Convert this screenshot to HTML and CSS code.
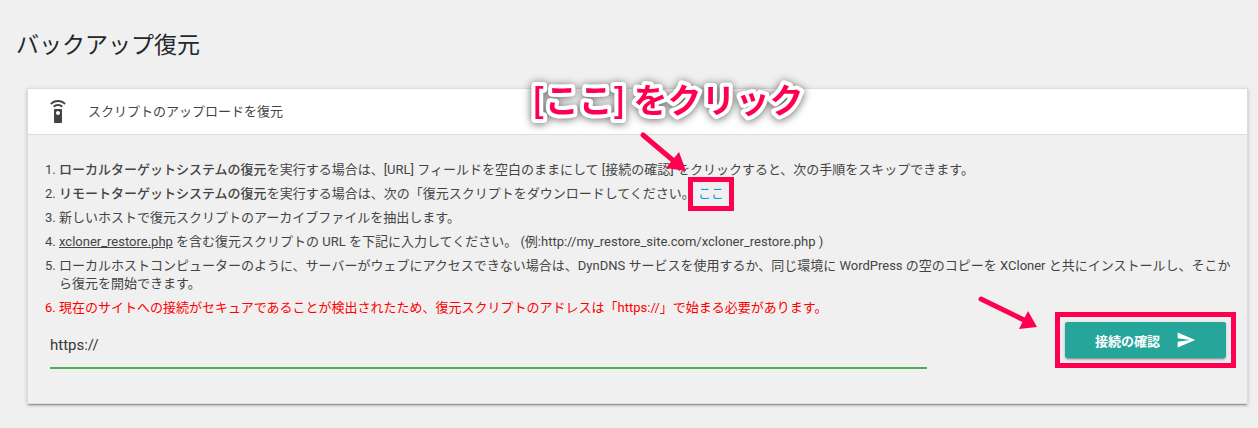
FILE: index.html
```html
<!DOCTYPE html>
<html lang="ja">

<head>
    <meta charset="UTF-8">
    <meta name="viewport" content="width=device-width, initial-scale=1.0">
    <title>バックアップ復元</title>
    <link rel="stylesheet" href="styles.css">
</head>

<body>
    <h1>バックアップ復元</h1>
    <section class="card">
        <header class="card-header">
            <svg class="remote-icon" viewBox="0 0 24 24" aria-hidden="true">
                <path d="M15 9H9c-.55 0-1 .45-1 1v12c0 .55.45 1 1 1h6c.55 0 1-.45 1-1V10c0-.55-.45-1-1-1zm-3 6c-1.100 0-2-.9-2-2s.9-2 2-2 2 .9 2 2-.9 2-2 2zM7.050 6.050l1.410 1.410C9.370 6.560 10.620 6 12 6s2.630.56 3.540 1.460l1.410-1.410C15.680 4.780 13.930 4 12 4s-3.680.78-4.950 2.050zM12 0C8.960 0 6.210 1.230 4.220 3.220l1.410 1.410C7.260 3.010 9.510 2 12 2s4.740 1.010 6.360 2.640l1.410-1.410C17.790 1.230 15.040 0 12 0z" />
            </svg>
            <h2>スクリプトのアップロードを復元</h2>
            <svg class="callout" viewBox="0 0 300 120">
                <text x="11" y="47">[ここ] をクリック</text>
                <path class="shaft" d="M122 69L154 96" />
                <path d="M165 105L158 86L145 102Z" />
            </svg>
        </header>
        <div class="card-body">
            <ol class="steps">
                <li><strong>ローカルターゲットシステムの復元</strong>を実行する場合は、[URL] フィールドを空白のままにして [接続の確認] をクリックすると、次の手順をスキップできます。</li>
                <li><strong>リモートターゲットシステムの復元</strong>を実行する場合は、次の「復元スクリプトをダウンロードしてください。 <a class="here" href="#">ここ</a></li>
                <li>新しいホストで復元スクリプトのアーカイブファイルを抽出します。</li>
                <li><u>xcloner_restore.php</u> を含む復元スクリプトの URL を下記に入力してください。 (例:http://my_restore_site.com/xcloner_restore.php )</li>
                <li>ローカルホストコンピューターのように、サーバーがウェブにアクセスできない場合は、DynDNS サービスを使用するか、同じ環境に WordPress の空のコピーを XCloner と共にインストールし、そこから復元を開始できます。</li>
                <li class="warning">現在のサイトへの接続がセキュアであることが検出されたため、復元スクリプトのアドレスは「https://」で始まる必要があります。</li>
            </ol>
            <form class="row">
                <input class="url" type="text" value="https://" aria-label="復元スクリプトの URL">
                <div class="action">
                    <button class="btn" type="button">接続の確認
                        <svg viewBox="0 0 24 24" aria-hidden="true">
                            <path d="M2 21L23 12 2 3v7l15 2-15 2z" />
                        </svg>
                    </button>
                    <svg class="btn-arrow" viewBox="0 0 60 34" aria-hidden="true">
                        <path class="shaft" d="M3 3L48 25" />
                        <path d="M59 31L50 15L41 33Z" />
                    </svg>
                </div>
            </form>
        </div>
    </section>
</body>

</html>
```

FILE: styles.css
```css
* {
    box-sizing: border-box;
}

body {
    margin: 0;
    padding: 30px 10px 24px 16px;
    background-color: #f0f0f0;
    color: #444;
    font-family: Roboto, "Noto Sans CJK JP", sans-serif;
    font-size: 13px;
    line-height: 18px;
}

h1 {
    margin: 0 0 26px;
    color: #23282d;
    font-size: 23px;
    font-weight: 400;
    line-height: 32px;
}

.card {
    margin-left: 11px;
    border: 1px solid #ddd;
    box-shadow: 0 2px 2px 0 rgba(0, 0, 0, 0.14), 0 1px 5px 0 rgba(0, 0, 0, 0.12), 0 3px 1px -2px rgba(0, 0, 0, 0.2);
}

.card-header {
    position: relative;
    display: flex;
    align-items: center;
    gap: 18px;
    height: 46px;
    padding: 0 18px;
    background-color: #fff;
    border-bottom: 1px solid #ddd;
}

.card-header h2 {
    margin: 0;
    font-size: 13px;
    font-weight: 400;
}

.remote-icon {
    width: 24px;
    height: 24px;
    fill: #444;
}

.card-body {
    padding: 26px 10px 34px 11px;
}

.steps {
    margin: 0;
    padding-left: 20px;
}

.steps li {
    margin-bottom: 6px;
}

.steps li:last-child {
    margin-bottom: 5px;
}

.steps strong {
    font-weight: 500;
}

.steps .warning {
    color: #f00;
}

.here {
    position: relative;
    display: inline-block;
    color: #039be5;
    text-decoration: none;
}

.row {
    display: flex;
    margin: 0;
}

.url {
    flex: 1;
    height: 47px;
    margin: 0 11px;
    padding: 0;
    background: transparent;
    border: none;
    border-bottom: 2px solid #4caf50;
    outline: none;
    color: #32373c;
    font-family: inherit;
    font-size: 15px;
}

.action {
    position: relative;
    display: flex;
    justify-content: flex-end;
    align-items: flex-start;
    width: 25%;
    padding: 0 11px;
}

.btn {
    position: relative;
    display: flex;
    align-items: center;
    gap: 16px;
    height: 36px;
    padding: 0 30px;
    background-color: #26a69a;
    border: none;
    border-radius: 2px;
    box-shadow: 0 2px 2px 0 rgba(0, 0, 0, 0.14), 0 1px 5px 0 rgba(0, 0, 0, 0.12), 0 3px 1px -2px rgba(0, 0, 0, 0.2);
    color: #fff;
    font-family: inherit;
    font-size: 13px;
    font-weight: 700;
    cursor: pointer;
}

.btn svg {
    width: 20px;
    height: 20px;
    fill: currentColor;
}

/* red guide marks */
.here::after,
.btn::after {
    content: "";
    position: absolute;
    border: 5px solid #ff0050;
}

.here::after {
    inset: -8px -10px;
}

.btn::after {
    inset: -10px;
}

.callout {
    position: absolute;
    top: -23px;
    left: 493px;
    width: 300px;
    height: 120px;
    overflow: visible;
    fill: #ff0050;
    font-size: 34px;
    font-weight: 700;
    pointer-events: none;
}

.callout text {
    font-family: "Noto Sans CJK JP", sans-serif;
    stroke: #fff;
    stroke-width: 8px;
    stroke-linejoin: round;
    paint-order: stroke fill;
    filter: drop-shadow(0 1px 4px rgba(0, 0, 0, 0.6));
}

.btn-arrow {
    position: absolute;
    top: -26px;
    right: 199px;
    width: 60px;
    height: 34px;
    fill: #ff0050;
}

.shaft {
    fill: none;
    stroke: #ff0050;
    stroke-width: 5;
    stroke-linecap: round;
}
```
